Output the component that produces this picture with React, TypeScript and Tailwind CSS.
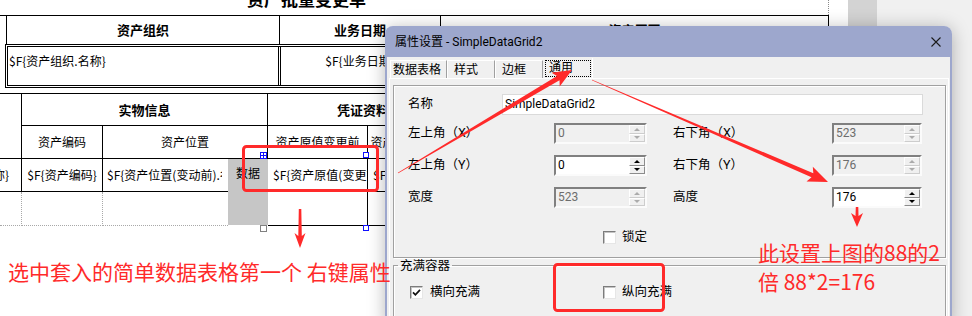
import type { ReactNode } from 'react';

const RED = '#ff2a2a';

type Pt = [number, number];

/** Tapered annotation arrow: hairline tail, thicker neck, swept head */
function arrowPolygon(tail: Pt, tip: Pt, w0: number, w1: number, headLen: number, headHalf: number) {
  const dx = tip[0] - tail[0];
  const dy = tip[1] - tail[1];
  const d = Math.hypot(dx, dy);
  const ux = dx / d;
  const uy = dy / d;
  const nx = -uy;
  const ny = ux;
  const bx = tip[0] - ux * headLen;
  const by = tip[1] - uy * headLen;
  // wings sit a bit behind the neck
  const wx = bx - ux * 3;
  const wy = by - uy * 3;
  const pts: Pt[] = [
    [tail[0] + (nx * w0) / 2, tail[1] + (ny * w0) / 2],
    [bx + (nx * w1) / 2, by + (ny * w1) / 2],
    [wx + nx * headHalf, wy + ny * headHalf],
    tip,
    [wx - nx * headHalf, wy - ny * headHalf],
    [bx - (nx * w1) / 2, by - (ny * w1) / 2],
    [tail[0] - (nx * w0) / 2, tail[1] - (ny * w0) / 2],
  ];
  return pts.map(([x, y]) => `${x.toFixed(1)},${y.toFixed(1)}`).join(' ');
}

const ARROWS: { tail: Pt; tip: Pt; w0: number; w1: number; len: number; half: number }[] = [
  { tail: [398, 173], tip: [572, 70], w0: 0.6, w1: 5, len: 16, half: 8 },
  { tail: [592, 80], tip: [828, 182], w0: 0.4, w1: 4.5, len: 17, half: 8 },
  { tail: [857, 207], tip: [857, 227], w0: 2.5, w1: 3, len: 11, half: 6 },
  { tail: [300, 209], tip: [300, 248], w0: 2.5, w1: 3.5, len: 12, half: 5.5 },
];

// ─── Report designer (background) ───

function Report() {
  return (
    <div className="w-[848px] shrink-0 bg-white font-['Noto_Sans_CJK_SC',sans-serif] text-[12px] leading-[16px] text-black">
      {/* title, mostly scrolled off the top */}
      <div className="flex h-[15px] w-[829px] items-end border-r border-dotted border-[#8a8a8a] pl-[247px]">
        <span className="mb-[8px] text-[17px] font-bold leading-[17px]">资产批量变更单</span>
      </div>

      {/* header block */}
      <div className="flex h-[29px] w-[829px] border-t border-r border-black text-[13px] font-bold">
        <div className="w-[7px] border-r border-black" />
        <div className="flex w-[273px] items-center justify-center border-r border-black">资产组织</div>
        <div className="flex w-[161px] items-center justify-center border-r border-black">业务日期</div>
        <div className="flex flex-1 items-center justify-center">资产原因</div>
      </div>
      <div className="ml-[5px] flex h-[44px] w-[824px] border-[3px] border-double border-black">
        <div className="w-[273px] whitespace-nowrap border-r-[3px] border-double border-black pl-[1px] pt-[6px]">
          $F{'{'}资产组织.名称{'}'}
        </div>
        <div className="flex w-[161px] justify-center whitespace-nowrap border-r-[3px] border-double border-black pt-[6px]">
          $F{'{'}业务日期{'}'}
        </div>
        <div className="flex flex-1 justify-center pt-[6px]">$F{'{'}资产原因{'}'}</div>
      </div>
      <div className="h-[5px]" />

      {/* detail block */}
      <div className="grid w-[829px] grid-cols-[22px_81px_125px_40px_100px_90px_1fr] grid-rows-[32px_33px_33px_34px] border-t border-r border-black">
        {/* row A */}
        <div className="border-r border-black" />
        <div className="col-span-3 flex items-center justify-center border-r border-b border-black text-[13px] font-bold">
          实物信息
        </div>
        <div className="col-span-2 flex items-center justify-center border-b border-black text-[13px] font-bold">
          凭证资料
        </div>
        <div className="border-b border-black" />

        {/* row B */}
        <div className="border-r border-b border-black" />
        <div className="flex items-center justify-center border-r border-b border-black">资产编码</div>
        <div className="col-span-2 flex items-center justify-center border-r border-b border-black">资产位置</div>
        <div className="flex items-center justify-center whitespace-nowrap border-r border-b border-black">资产原值变更前</div>
        <div className="flex items-center justify-center overflow-hidden whitespace-nowrap border-r border-b border-black">资产原值变更后</div>
        <div className="border-b border-black" />

        {/* row C */}
        <div className="flex items-center justify-end overflow-hidden whitespace-nowrap border-r border-b border-black pr-[12px]">
          $F{'{'}资产名称{'}'}
        </div>
        <div className="flex items-center justify-center whitespace-nowrap border-r border-b border-black">
          $F{'{'}资产编码{'}'}
        </div>
        <div className="flex items-center border-b border-black pl-[4px]">
          <span className="block w-[115px] overflow-hidden whitespace-nowrap">$F{'{'}资产位置(变动前).名称{'}'}</span>
        </div>
        <div className="row-span-2 mb-[1px] flex justify-center bg-[#c6c6c6] pt-[6px]">数据</div>
        <div className="flex items-center overflow-hidden whitespace-nowrap border-r border-b border-black pl-[5px]">
          $F{'{'}资产原值(变更前){'}'}
        </div>
        <div className="flex items-center overflow-hidden whitespace-nowrap border-r border-b border-black pl-[5px]">
          $F{'{'}资产原值(变更后){'}'}
        </div>
        <div className="border-b border-black" />

        {/* row D */}
        <div className="border-r border-b border-dotted border-[#a8a8a8]" />
        <div className="border-r border-b border-dotted border-[#a8a8a8]" />
        <div className="border-b border-dotted border-[#a8a8a8]" />
        <div className="border-r border-b border-black" />
        <div className="border-r border-b border-black" />
        <div className="border-b border-black" />
      </div>
    </div>
  );
}

// ─── Dialog controls ───

function SpinButton({ up, disabled }: { up?: boolean; disabled?: boolean }) {
  const tri = up
    ? `border-x-[3px] border-b-[3px] border-x-transparent ${disabled ? 'border-b-[#ababab]' : 'border-b-black'}`
    : `border-x-[3px] border-t-[3px] border-x-transparent ${disabled ? 'border-t-[#ababab]' : 'border-t-black'}`;
  return (
    <span
      className={`flex flex-1 items-center justify-center border border-t-white border-l-white bg-[#f0f0f0] ${
        disabled ? 'border-r-[#cdcdcd] border-b-[#cdcdcd]' : 'border-r-[#8c8c8c] border-b-[#8c8c8c]'
      }`}
    >
      <span className={`h-0 w-0 ${tri}`} />
    </span>
  );
}

function SpinBox({ value, disabled, className }: { value: string; disabled?: boolean; className: string }) {
  return (
    <div
      className={`flex h-[21px] border-2 border-t-[#808080] border-l-[#808080] border-r-[#fbfbfb] border-b-[#fbfbfb] ${
        disabled ? 'bg-[#f0f0f0] text-[#6d6d6d]' : 'bg-white text-black'
      } ${className}`}
    >
      <span className="flex-1 pl-[2px] leading-[17px]">{value}</span>
      <span className="flex w-[16px] flex-col">
        <SpinButton up disabled={disabled} />
        <SpinButton disabled={disabled} />
      </span>
    </div>
  );
}

function CheckBox({ checked }: { checked?: boolean }) {
  return (
    <span className="flex h-[13px] w-[13px] shrink-0 items-center justify-center border border-t-[#7c7c7c] border-l-[#7c7c7c] border-r-[#e6e6e6] border-b-[#e6e6e6] bg-white shadow-[inset_1px_1px_0_#c4c4c4]">
      {checked && (
        <svg width="9" height="9" viewBox="0 0 9 9">
          <path d="M1 4.3L3.4 6.8L8 1.8" fill="none" stroke="#111" strokeWidth="1.7" />
        </svg>
      )}
    </span>
  );
}

function Label({ className, children }: { className: string; children: ReactNode }) {
  return <span className={`whitespace-nowrap text-[12.5px] ${className}`}>{children}</span>;
}

function Dialog() {
  const tab = 'flex h-[18px] items-center border-l border-t border-r border-l-white border-t-white border-r-[#a0a0a0]';
  return (
    <div className="absolute left-[385px] top-[26px] flex h-[300px] w-[567px] flex-col rounded-t-[8px] bg-[#f0f0f0] font-[Roboto,'Noto_Sans_CJK_SC',sans-serif] text-[12px] text-black shadow-[0_2px_18px_rgba(0,0,0,0.28)]">
      {/* title bar */}
      <div className="flex h-[31px] shrink-0 items-center justify-between rounded-t-[8px] bg-[#9da7cd] pl-[10px] pr-[11px]">
        <span>属性设置 - SimpleDataGrid2</span>
        <svg width="10" height="10" viewBox="0 0 10 10">
          <path d="M0.5 0.5L9.5 9.5M9.5 0.5L0.5 9.5" stroke="#1b1b1b" strokeWidth="1.1" />
        </svg>
      </div>

      <div className="flex flex-1 flex-col border-x-2 border-[#9da7cd]">
        {/* tabs */}
        <div className="flex h-[21px] shrink-0 items-end pl-[3px]">
          <div className={`${tab} w-[57px] pl-[2px]`}>数据表格</div>
          <div className={`${tab} w-[48px] pl-[6px]`}>样式</div>
          <div className={`${tab} w-[48px] pl-[6px]`}>边框</div>
          <div className="flex h-[20px] w-[50px] items-center border-r border-white">
            <span className="ml-[2px] flex h-[17px] w-[46px] items-center border border-dotted border-black pl-[3px]">通用</span>
          </div>
        </div>

        {/* tab page */}
        <div className="ml-[2px] mr-[1px] flex-1 border-l border-t border-r border-white pl-[3px] pr-[2px] pt-[6px]">
          <div className="h-[173px] border border-[#a0a0a0] pl-[14px] pt-[8px] shadow-[1px_1px_0_#fff,inset_1px_1px_0_#fff]">
            <div className="flex h-[21px] items-center">
              <Label className="w-[94px]">名称</Label>
              <div className="h-[21px] w-[421px] border border-[#dadada] bg-white pl-[2px] leading-[19px]">SimpleDataGrid2</div>
            </div>
            <div className="mt-[8px] flex h-[21px] items-center">
              <Label className="w-[146px]">左上角（X）</Label>
              <SpinBox value="0" disabled className="w-[93px]" />
              <Label className="ml-[26px] w-[159px]">右下角（X）</Label>
              <SpinBox value="523" disabled className="w-[90px]" />
            </div>
            <div className="mt-[11px] flex h-[21px] items-center">
              <Label className="w-[146px]">左上角（Y）</Label>
              <SpinBox value="0" className="w-[93px]" />
              <Label className="ml-[26px] w-[159px]">右下角（Y）</Label>
              <SpinBox value="176" disabled className="w-[90px]" />
            </div>
            <div className="mt-[11px] flex h-[21px] items-center">
              <Label className="w-[146px]">宽度</Label>
              <SpinBox value="523" disabled className="w-[93px]" />
              <Label className="ml-[26px] w-[159px]">高度</Label>
              <SpinBox value="176" className="w-[90px]" />
            </div>
            <div className="mt-[23px] flex h-[13px] items-center pl-[195px]">
              <CheckBox />
              <Label className="ml-[6px]">锁定</Label>
            </div>
          </div>

          <fieldset className="h-[80px] border border-[#a0a0a0] px-[16px] pt-[13px] shadow-[1px_1px_0_#fff,inset_1px_1px_0_#fff]">
            <legend className="-ml-[12px] px-[2px] text-[12.5px] leading-[15px]">充满容器</legend>
            <div className="flex h-[13px] items-center">
              <div className="flex w-[193px] items-center">
                <CheckBox checked />
                <Label className="ml-[7px]">横向充满</Label>
              </div>
              <CheckBox />
              <Label className="ml-[6px]">纵向充满</Label>
            </div>
          </fieldset>
        </div>
      </div>
    </div>
  );
}

// ─── Red markup drawn over the screenshot ───

function Annotations() {
  return (
    <>
      <svg className="pointer-events-none absolute left-0 top-0" width="972" height="316" viewBox="0 0 972 316">
        {/* designer selection handles */}
        <rect x="260.5" y="152.5" width="6" height="6" fill="white" stroke="#1010ff" />
        <path d="M263.5 152.5V158.5M260.5 155.5H266.5" stroke="#1010ff" />
        <rect x="363.5" y="152.5" width="5" height="5" fill="white" stroke="#1010ff" />
        <rect x="260.5" y="225.5" width="6" height="6" fill="white" stroke="#808080" />
        <rect x="363.5" y="225.5" width="5" height="5" fill="white" stroke="#1010ff" />

        <rect x="243.5" y="146.5" width="134" height="44" rx="3" fill="none" stroke={RED} strokeWidth="3" />
        <rect x="554.5" y="264.5" width="109" height="46" rx="3" fill="none" stroke={RED} strokeWidth="3" />
        {ARROWS.map((a, i) => (
          <polygon key={i} points={arrowPolygon(a.tail, a.tip, a.w0, a.w1, a.len, a.half)} fill={RED} />
        ))}
      </svg>

      <div className="pointer-events-none absolute left-[8px] top-[257px] whitespace-nowrap font-['Noto_Sans_CJK_SC',sans-serif] text-[21px] leading-[29px] text-[#ff2a2a]">
        选中套入的简单数据表格第一个 右键属性
      </div>
      <div className="pointer-events-none absolute left-[758px] top-[238px] whitespace-nowrap font-['Noto_Sans_CJK_SC',sans-serif] text-[21px] leading-[29px] text-[#ff2a2a]">
        <div>此设置上图的88的2</div>
        <div>倍 88*2=176</div>
      </div>
    </>
  );
}

export default function App() {
  return (
    <div className="relative h-[316px] w-[972px] overflow-hidden bg-white">
      <div className="flex h-full">
        <Report />
        <div className="w-[29px] shrink-0 bg-[#d3d3d3]" />
        <div className="flex-1 bg-[#f0f0f0]" />
      </div>
      <Dialog />
      <Annotations />
    </div>
  );
}
